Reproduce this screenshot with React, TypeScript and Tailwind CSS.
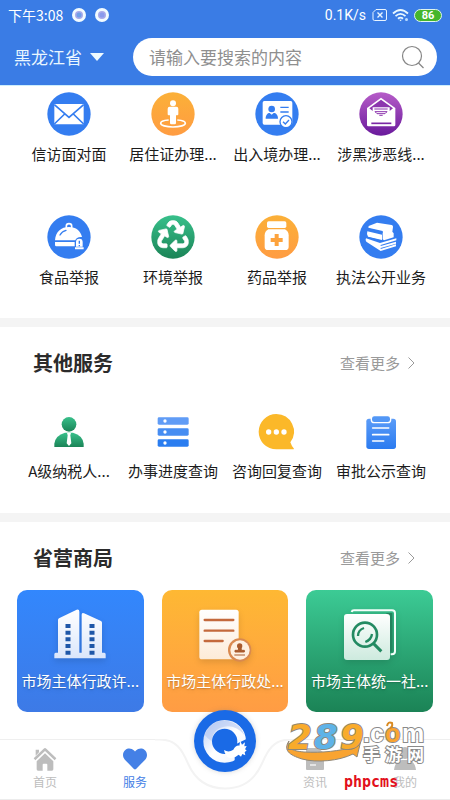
import type { ReactNode } from 'react';
import { FaHeart, FaRecycle } from 'react-icons/fa';

/**
 * 政务服务首页（服务 tab）
 *
 * 顶部搜索栏 + 服务宫格 + 其他服务 + 省营商局卡片 + 底部导航。
 * 图标统一画在 132 x 132 的 viewBox 里，渲染为 44px。
 */

interface Service {
  name: string;
  icon: ReactNode;
}

function Icon({ children }: { children: ReactNode }) {
  return (
    <svg viewBox="0 0 132 132" className="size-11" fill="none" aria-hidden="true">
      {children}
    </svg>
  );
}

function Gradients() {
  return (
    <svg className="absolute size-0" aria-hidden="true">
      <defs>
        <linearGradient id="orange" x1="0" y1="0" x2="0" y2="1">
          <stop offset="0" stopColor="#fbb038" />
          <stop offset="1" stopColor="#ff9c42" />
        </linearGradient>
        <linearGradient id="purple" x1="0" y1="0" x2="0" y2="1">
          <stop offset="0" stopColor="#b65cc8" />
          <stop offset="1" stopColor="#6a1a9c" />
        </linearGradient>
        <linearGradient id="green" x1="0" y1="0" x2="0" y2="1">
          <stop offset="0" stopColor="#38c08b" />
          <stop offset="1" stopColor="#1b8457" />
        </linearGradient>
        <linearGradient id="blue" x1="0" y1="0" x2="0" y2="1">
          <stop offset="0" stopColor="#5b9cf8" />
          <stop offset="1" stopColor="#2b7bf0" />
        </linearGradient>
        <linearGradient id="paper" x1="0" y1="0" x2="0" y2="1">
          <stop offset="0" stopColor="#ffffff" />
          <stop offset="1" stopColor="#dbe6fb" />
        </linearGradient>
        <linearGradient id="paperWarm" x1="0" y1="0" x2="0" y2="1">
          <stop offset="0" stopColor="#ffffff" />
          <stop offset="1" stopColor="#fdebd8" />
        </linearGradient>
        <linearGradient id="paperMint" x1="0" y1="0" x2="0" y2="1">
          <stop offset="0" stopColor="#ffffff" />
          <stop offset="1" stopColor="#cdeade" />
        </linearGradient>
        <linearGradient id="ring" x1="0" y1="0" x2="1" y2="1">
          <stop offset="0" stopColor="#c6d7f8" />
          <stop offset="0.5" stopColor="#ffffff" />
          <stop offset="1" stopColor="#f0f5fe" />
        </linearGradient>
      </defs>
    </svg>
  );
}

const HOT_SERVICES: Service[] = [
  {
    name: '信访面对面',
    icon: (
      <Icon>
        <circle cx="66" cy="66" r="65" fill="#347df0" />
        <rect x="22" y="36" width="88" height="61" rx="2" fill="#fff" />
        <path d="M22 38l44 38 44-38M22 96l31-30M110 96L79 66" stroke="#347df0" strokeWidth="5" />
      </Icon>
    ),
  },
  {
    name: '居住证办理...',
    icon: (
      <Icon>
        <circle cx="66" cy="66" r="65" fill="url(#orange)" />
        <path d="M53 84c-14 1-24 5-24 10 0 6 16 11 37 11s37-5 37-11c0-5-10-9-24-10" stroke="#fff" strokeWidth="5" />
        <circle cx="66" cy="34" r="9" fill="#fff" />
        <path d="M56 44h20q6 0 6 6v17q0 3-3 3h-4v23q0 4-4 4H61q-4 0-4-4V70h-4q-3 0-3-3V50q0-6 6-6z" fill="#fff" />
      </Icon>
    ),
  },
  {
    name: '出入境办理...',
    icon: (
      <Icon>
        <circle cx="66" cy="66" r="65" fill="#347df0" />
        <rect x="23" y="27" width="89" height="71" rx="5" fill="#fff" />
        <circle cx="50" cy="51" r="10" fill="#347df0" />
        <path d="M32 80c0-11 6-17 12-17l6 5 6-5c7 0 13 6 13 17z" fill="#347df0" />
        <path d="M76 46h25M76 60h25" stroke="#347df0" strokeWidth="4" />
        <circle cx="93" cy="89" r="18" fill="#fff" stroke="#347df0" strokeWidth="4" />
        <path d="M84 89l7 7 11-12" stroke="#347df0" strokeWidth="4" />
      </Icon>
    ),
  },
  {
    name: '涉黑涉恶线...',
    icon: (
      <Icon>
        <circle cx="66" cy="66" r="65" fill="url(#purple)" />
        <path d="M24 48l42-31 43 31v51q0 4-4 4H28q-4 0-4-4z" fill="#fff" />
        <path d="M31 49l35-26 36 26-10 8V46H41v11z" fill="#8c35ae" />
        <path d="M46 51h40M48 59h36l-6 6H54zM61 70h10" stroke="#8c35ae" strokeWidth="3" />
        <path d="M37 94h60" stroke="#7b28a5" strokeWidth="5" />
      </Icon>
    ),
  },
  {
    name: '食品举报',
    icon: (
      <Icon>
        <circle cx="66" cy="66" r="65" fill="#347df0" />
        <path d="M58 42v-9q0-7 8-7t8 7v9" stroke="#fff" strokeWidth="5" />
        <path d="M24 76c2-26 18-40 42-40 22 0 35 12 39 30-12-1-18 3-20 10z" fill="#fff" />
        <path d="M39 60q6-11 18-14" stroke="#347df0" strokeWidth="4" strokeLinecap="round" />
        <path d="M24 81h59v13H28q-4 0-4-5z" fill="#fff" />
        <path d="M87 95V81q0-10 10-10t10 10v14zM84 97h26v6H84z" fill="#fff" />
        <path d="M97 77v9M97 90v4" stroke="#347df0" strokeWidth="4" />
      </Icon>
    ),
  },
  {
    name: '环境举报',
    icon: (
      <Icon>
        <circle cx="66" cy="66" r="65" fill="url(#green)" />
        <FaRecycle x="19" y="16" size="94" color="#fff" style={{ strokeWidth: 12 }} />
      </Icon>
    ),
  },
  {
    name: '药品举报',
    icon: (
      <Icon>
        <circle cx="66" cy="66" r="65" fill="url(#orange)" />
        <rect x="36" y="19" width="58" height="20" rx="5" fill="#fff" />
        <path d="M40 43h50q11 6 11 18v34q0 10-10 10H39q-10 0-10-10V61q0-12 11-18z" fill="#fff" />
        <path d="M65 57v36M47 75h36" stroke="#fda33d" strokeWidth="12" />
      </Icon>
    ),
  },
  {
    name: '执法公开业务',
    icon: (
      <Icon>
        <circle cx="66" cy="66" r="65" fill="#347df0" />
        <path d="M29 33l25-10 44 7q5 1 4 6l-2 14 4 5v12l-29 9-4-3V48L28 38z" fill="#fff" />
        <path d="M25 49l44 10v16L27 65q-5-7-2-16z" fill="#fff" />
        <path d="M21 70l42 14 49-14v6L65 90v3l46-13v6L65 99v3l46-14v6l-46 14-43-28q-4-5-1-10z" fill="#fff" />
        <path d="M27 42l44 10M25 67l45 12" stroke="#347df0" strokeWidth="4" />
      </Icon>
    ),
  },
];

const OTHER_SERVICES: Service[] = [
  {
    name: 'A级纳税人...',
    icon: (
      <Icon>
        <circle cx="66" cy="46" r="22" fill="url(#green)" />
        <path d="M22 114V104q3-25 32-33h24q29 8 32 33v10z" fill="url(#green)" />
        <path d="M60 72h12l-2 7 3 24-7 8-7-8 3-24z" fill="#fff" />
      </Icon>
    ),
  },
  {
    name: '办事进度查询',
    icon: (
      <Icon>
        <rect x="20" y="25" width="93" height="22" rx="4" fill="#609cf6" />
        <rect x="20" y="58" width="93" height="22" rx="4" fill="#468df2" />
        <rect x="20" y="91" width="93" height="22" rx="4" fill="#2a7df0" />
        <circle cx="42" cy="36" r="5" fill="#fff" />
        <circle cx="42" cy="69" r="5" fill="#fff" />
        <circle cx="42" cy="102" r="5" fill="#fff" />
      </Icon>
    ),
  },
  {
    name: '咨询回复查询',
    icon: (
      <Icon>
        <path d="M64 15a53 53 0 0 1 42 85q4 12 11 19l-1 2H64a53 53 0 0 1 0-106z" fill="#fbb829" />
        <circle cx="41" cy="69" r="8" fill="#fff" />
        <circle cx="64" cy="69" r="8" fill="#fff" />
        <circle cx="87" cy="69" r="8" fill="#fff" />
      </Icon>
    ),
  },
  {
    name: '审批公示查询',
    icon: (
      <Icon>
        <rect x="22" y="29" width="89" height="91" rx="8" fill="url(#blue)" />
        <rect x="37" y="20" width="58" height="21" rx="9" fill="#5297f6" stroke="#fff" strokeWidth="4" />
        <path d="M41 57h48M41 77h48M41 96h33" stroke="#fff" strokeWidth="5" strokeLinecap="round" />
      </Icon>
    ),
  },
];

interface BureauCard {
  name: string;
  background: string;
  icon: ReactNode;
}

const BUREAU_CARDS: BureauCard[] = [
  {
    name: '市场主体行政许...',
    background: 'bg-linear-to-b from-[#3287fd] to-[#3d7ae6]',
    icon: (
      <>
        <path d="M15 134V36q0-3 3-5L71 5q8-2 8 6v123h7V20q0-7 7-4l51 23q3 2 3 5v90h7q4 0 4 5v12H4v-12q0-5 4-5z" fill="url(#paper)" />
        <path d="M45 48v93M117 48v93" stroke="#1f57a8" strokeWidth="15" strokeDasharray="12 8" />
      </>
    ),
  },
  {
    name: '市场主体行政处...',
    background: 'bg-linear-to-b from-[#feb833] to-[#ff9c44]',
    icon: (
      <>
        <rect x="4" y="5" width="118" height="149" rx="8" fill="url(#paperWarm)" />
        <path d="M20 36h86M20 68h86M20 99h54" stroke="#c4693c" strokeWidth="7" strokeLinecap="round" />
        <circle cx="125" cy="126" r="35" fill="#d9894f" />
        <circle cx="126" cy="126" r="29" fill="#fef0e0" />
        <path d="M109 141h32M111 132h28v-5h-9l-1-9h-7l-1 9h-10z" fill="#a95a2c" stroke="#a95a2c" strokeWidth="3" />
        <circle cx="125" cy="114" r="8" fill="#a95a2c" />
      </>
    ),
  },
  {
    name: '市场主体统一社...',
    background: 'bg-linear-to-b from-[#3ccb95] to-[#1b8356]',
    icon: (
      <>
        <path d="M26 12q1-5 7-5h114q9 0 9 9v114q0 9-9 9h-4" stroke="#f3fffa" strokeWidth="6" />
        <path d="M130 15h18v116h-8z" fill="#23835d" />
        <rect x="3" y="18" width="138" height="138" rx="9" fill="url(#paperMint)" />
        <circle cx="66" cy="80" r="36" stroke="#238a62" strokeWidth="8" />
        <path d="M45 84q0-18 18-24M87 78q-2 17-20 24" stroke="#238a62" strokeWidth="7" />
        <path d="M91 106l24 24" stroke="#238a62" strokeWidth="9" />
      </>
    ),
  },
];

function StatusBar() {
  return (
    <div className="flex h-[30px] items-center px-2 text-sm text-white">
      <span>下午3:08</span>
      <svg viewBox="0 0 40 16" className="ml-2 h-4 w-10" aria-hidden="true">
        <g fill="#a9a9ea" stroke="#f2fbff" strokeWidth="3">
          <circle cx="8" cy="8" r="5.5" />
          <circle cx="31" cy="8" r="5.5" />
        </g>
        <circle cx="8" cy="8" r="2.5" fill="#6f9fe8" />
        <circle cx="31" cy="8" r="2.5" fill="#8a9aec" />
      </svg>
      <span className="ml-auto [font-family:Roboto,sans-serif]">0.1K/s</span>
      <svg viewBox="0 0 16 14" className="ml-[6px] h-[14px] w-4" fill="none" stroke="#e8f4ff" aria-hidden="true">
        <path d="M4 1.500h9q1.500 0 1.500 1.500v8q0 1.500-1.500 1.500H2.500q-1.500 0-1.500-1.500V4.500z" />
        <path d="M5.500 4.500l5 5M10.500 4.500l-5 5" strokeWidth="1.400" />
      </svg>
      <svg viewBox="0 0 18 14" className="ml-1 h-[14px] w-[18px]" fill="none" stroke="#e8f8ff" strokeWidth="1.800" aria-hidden="true">
        <path d="M1 5.500q7.500-7 15 0M3.500 8.200q5-4.600 10 0M6 10.700q2.500-2.200 5 0" />
        <path d="M7.300 11.800h2.500l-1.200 1.400z" fill="#e8f8ff" stroke="none" />
        <circle cx="14.500" cy="11.500" r="1.500" fill="#b9dcff" stroke="none" />
      </svg>
      <span className="ml-1 flex h-[13px] w-7 items-center justify-center rounded-full border border-[#dff5ee] bg-[#45b62c] text-[11px] leading-none font-bold [font-family:Roboto,sans-serif]">
        86
      </span>
    </div>
  );
}

function Header() {
  return (
    <header className="border-b border-[#cdeefc] bg-[#3a7ce5]">
      <StatusBar />
      <div className="flex items-center pt-2 pr-[13px] pb-[9px] pl-[14px]">
        <button type="button" className="flex w-[119px] items-center gap-2 text-[17px] text-[#e9f6ff]">
          黑龙江省
          <svg viewBox="0 0 14 8" className="h-2 w-[14px]" aria-hidden="true">
            <path d="M0 0h14L7 8z" fill="#effaff" />
          </svg>
        </button>
        <label className="flex h-[38px] min-w-0 flex-1 items-center rounded-full bg-white pr-3 pl-4">
          <input
            type="search"
            aria-label="搜索"
            placeholder="请输入要搜索的内容"
            className="min-w-0 flex-1 text-[17px] text-gray-800 outline-none placeholder:text-[#8f8f8f]"
          />
          <svg viewBox="0 0 24 24" className="size-6" fill="none" stroke="#868686" strokeWidth="1.200" aria-hidden="true">
            <circle cx="11" cy="11" r="9.500" />
            <path d="M17.500 18l5 5" />
          </svg>
        </label>
      </div>
    </header>
  );
}

function ServiceGrid({ items }: { items: Service[] }) {
  return (
    <div className="grid grid-cols-4 gap-y-[50px]">
      {items.map((item) => (
        <a key={item.name} href="#" className="flex flex-col items-center gap-[7px]">
          {item.icon}
          <span className="text-[15px] leading-[22px] whitespace-nowrap text-[#1c1c1c]">{item.name}</span>
        </a>
      ))}
    </div>
  );
}

function SectionTitle({ title }: { title: string }) {
  return (
    <div className="flex items-center justify-between pr-[18px] pl-4">
      <h2 className="text-xl leading-7 font-bold text-[#2b2b2b]">{title}</h2>
      <button type="button" className="flex items-center gap-2 text-[15px] leading-[22px] text-[#9a9a9a]">
        查看更多
        <svg viewBox="0 0 7 12" className="h-3 w-[7px]" fill="none" stroke="#9a9a9a" aria-hidden="true">
          <path d="M0.500 0.500L6 6l-5.500 5.500" />
        </svg>
      </button>
    </div>
  );
}

interface TabProps {
  label: string;
  active?: boolean;
  children: ReactNode;
}

function Tab({ label, active = false, children }: TabProps) {
  return (
    <a
      href="#"
      className={`relative flex flex-col items-center gap-[3px] text-xs leading-4 ${active ? 'text-[#4480e6]' : 'text-[#bdbdbd]'}`}
    >
      {children}
      {label}
    </a>
  );
}

// 站点水印，叠在底部导航右侧
function Watermark() {
  return (
    <svg
      viewBox="0 0 144 76"
      className="pointer-events-none absolute -top-[19px] right-[22px] h-[76px] w-36 overflow-visible"
      fill="none"
    >
      <path d="M5 21C2 28 8 31 20 32c18 1 36-1 49-5l-3-2 11-5-4 17-4-3c-14 7-36 9-51 5C5 35-1 30 5 21z" fill="#f9a431" stroke="#8f8778" />
      <g
        fontFamily="DejaVu Sans"
        fontWeight="bold"
        fontStyle="oblique"
        fontSize="34"
        stroke="#8f8778"
        strokeWidth="2"
        paintOrder="stroke"
      >
        <text x="4" y="29" fill="#f9ab2b">2</text>
        <text x="30" y="29" fill="#5eb3e8">8</text>
        <text x="56" y="29" fill="#f9ab2b">9</text>
      </g>
      <g
        fontFamily="Liberation Sans"
        fontWeight="bold"
        fontSize="25"
        fill="#fff"
        stroke="#8a8a8a"
        strokeWidth="2"
        paintOrder="stroke"
      >
        <text x="79" y="22">.</text>
        <text x="86" y="22">c</text>
        <text x="101" y="22" fill="#f9a431">o</text>
        <text x="118" y="22">m</text>
      </g>
      <path d="M103 6q1-5 5-3 1 4-2 5" stroke="#d98a22" strokeWidth="2" />
      <g
        fontFamily="Noto Sans CJK SC"
        fontWeight="bold"
        fontSize="17"
        fill="#fff"
        stroke="#8a8a8a"
        strokeWidth="2"
        paintOrder="stroke"
      >
        <text x="79" y="41">手</text>
        <text x="101" y="41">游</text>
        <text x="123" y="41">网</text>
      </g>
      <text x="60" y="67" fontFamily="DejaVu Sans Mono" fontWeight="bold" fontSize="15" fill="#e2101c">
        phpcms
      </text>
    </svg>
  );
}

function BottomNav() {
  return (
    <nav className="sticky bottom-0 mt-auto border-b border-[#ececec]">
      {/* 背景：两侧直线 + 中间凹槽 */}
      <div className="absolute inset-0 flex">
        <div className="flex-1 border-t border-[#efefef] bg-white" />
        <svg viewBox="0 0 140 60" className="h-[60px] w-[140px]" fill="none" aria-hidden="true">
          <path d="M0 0.500h5c16 0 22 10 28 24 7 16 20 25 37 25s30-9 37-25c6-14 12-24 28-24h5V60H0z" fill="#fff" />
          <path d="M0 0.500h5c16 0 22 10 28 24 7 16 20 25 37 25s30-9 37-25c6-14 12-24 28-24h5" stroke="#f3f3f3" strokeWidth="2" />
        </svg>
        <div className="flex-1 border-t border-[#efefef] bg-white" />
      </div>

      <div className="grid grid-cols-5 pt-2 pb-[9px]">
        <Tab label="首页">
          <svg viewBox="0 0 72 72" className="size-6" fill="#bdbdbd" aria-hidden="true">
            <path d="M2 34L32 5q4-4 8 0l30 29-5 6-29-28L7 40zM8 8h10v8L8 26z" />
            <path d="M11 43l25-24 25 24v24q0 4-4 4H43V53q0-3-3-3h-8q-3 0-3 3v18H15q-4 0-4-4z" />
          </svg>
        </Tab>
        <Tab label="服务" active>
          <FaHeart size={24} />
        </Tab>
        <span />
        <Tab label="资讯">
          <svg viewBox="0 0 24 24" className="size-6" fill="#bdbdbd" aria-hidden="true">
            <path d="M4 1h11l6 5v16q0 1-1 1H4q-1 0-1-1V2q0-1 1-1z" />
            <path d="M7 13h10M7 18h6" stroke="#e4e4e4" strokeWidth="2" />
          </svg>
        </Tab>
        <Tab label="我的">
          <svg viewBox="0 0 24 24" className="size-6" fill="#bdbdbd" aria-hidden="true">
            <circle cx="12" cy="6" r="6" />
            <path d="M1 23q1-9 8-10h6q7 1 8 10z" />
          </svg>
        </Tab>
      </div>

      <button
        type="button"
        aria-label="龙江政务"
        className="absolute -top-[29px] left-1/2 -translate-x-1/2 rounded-full shadow-[0_0_5px_rgba(120,120,120,0.3)]"
      >
        <svg viewBox="0 0 186 186" className="size-[62px]" fill="none" aria-hidden="true">
          <circle cx="93" cy="93" r="93" fill="#1a6ae6" />
          <circle cx="92" cy="94" r="51" stroke="url(#ring)" strokeWidth="26" />
          <path d="M32 74q22-46 68-42 40 8 52 44-26-32-62-26-34 6-37 44-12-8-21-20z" fill="#a9c0f0" opacity="0.500" />
          <path d="M122 104l34-16v56l-34 8z" fill="#1a6ae6" />
          <path
            d="M90 120q14 9 28-1 8-14 18-12l3-14 5 11 9-7-2 12 7-1-5 10 5 3-6 6 2 9-9-4-4 8-7-6q-8 8-22 10-14 0-15-9-6-6-7-15z"
            fill="#fff"
          />
        </svg>
      </button>
      <Watermark />
    </nav>
  );
}

export default function App() {
  return (
    <div className="relative flex min-h-screen flex-col bg-white [font-family:'Noto_Sans_CJK_SC','Noto_Sans',sans-serif]">
      <Gradients />
      <Header />
      <main>
        <section className="px-[17px] pt-[6px] pb-[30px]">
          <ServiceGrid items={HOT_SERVICES} />
        </section>

        <section className="border-t-[9px] border-[#f4f4f4] px-[17px] pt-[22px] pb-[31px]">
          <SectionTitle title="其他服务" />
          <div className="mt-8">
            <ServiceGrid items={OTHER_SERVICES} />
          </div>
        </section>

        <section className="border-t-[9px] border-[#f4f4f4] px-[17px] pt-[22px] pb-[27px]">
          <SectionTitle title="省营商局" />
          <div className="mt-[18px] grid grid-cols-3 gap-[18px]">
            {BUREAU_CARDS.map((card) => (
              <a
                key={card.name}
                href="#"
                className={`flex flex-col items-center gap-2 rounded-[10px] pt-[18px] pb-5 ${card.background}`}
              >
                <svg viewBox="0 0 162 162" className="size-[54px] drop-shadow-md" fill="none" aria-hidden="true">
                  {card.icon}
                </svg>
                <span className="text-[15px] leading-[22px] whitespace-nowrap text-white text-shadow-md">
                  {card.name}
                </span>
              </a>
            ))}
          </div>
        </section>
      </main>
      <BottomNav />
    </div>
  );
}
